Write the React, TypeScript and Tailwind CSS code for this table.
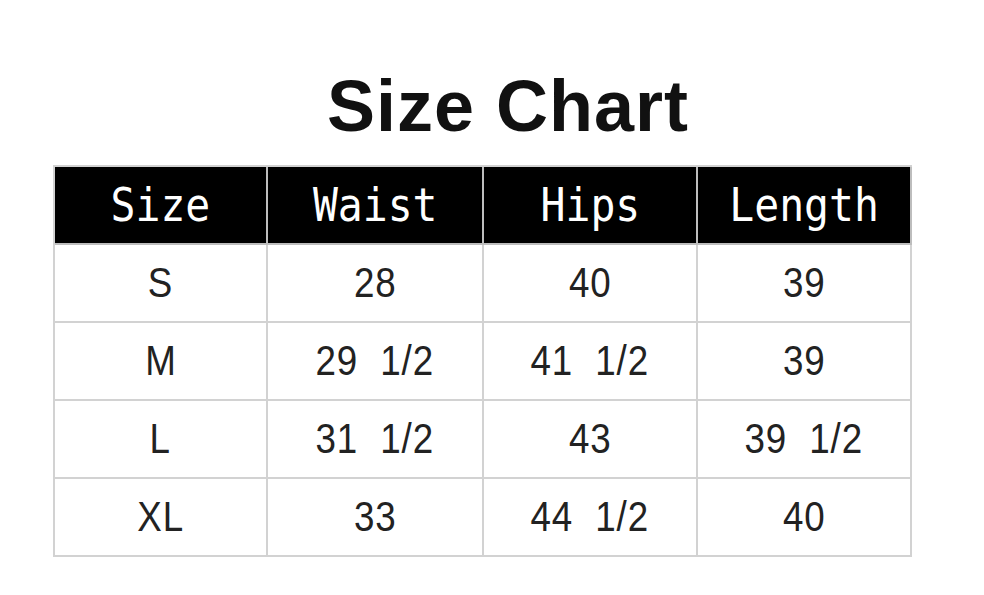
import React from 'react';

const headers = ['Size', 'Waist', 'Hips', 'Length'];

const rows: string[][] = [
  ['S', '28', '40', '39'],
  ['M', '29  1/2', '41  1/2', '39'],
  ['L', '31  1/2', '43', '39  1/2'],
  ['XL', '33', '44  1/2', '40'],
];

export default function App() {
  return (
    <div className="w-[984px] h-[595px] bg-white overflow-hidden">
      <div className="pt-[70px] pl-[32px] text-center">
        <h1 className="text-[72px] leading-[72px] font-bold tracking-[1px] text-[#111] font-['Liberation_Sans',Arial,sans-serif]">
          Size Chart
        </h1>
      </div>
      <div className="ml-[53px] mt-[23px] w-fit grid grid-cols-[213px_216px_214px_214px] border-l-2 border-t-2 border-[#d2d2d2]">
        {headers.map((h) => (
          <div
            key={h}
            className="h-[78px] bg-black border-r-2 border-b-2 border-[#bdbdbd] flex items-center justify-center"
          >
            <span className="inline-block text-white text-[46px] leading-none scale-x-[0.9] font-['DejaVu_Sans_Mono',monospace]">
              {h}
            </span>
          </div>
        ))}
        {rows.map((r) =>
          r.map((c, i) => (
            <div
              key={r[0] + i}
              className="h-[78px] bg-white border-r-2 border-b-2 border-[#d2d2d2] flex items-center justify-center"
            >
              <span className="inline-block whitespace-pre tracking-[1px] text-[#222] text-[42px] leading-none scale-x-[0.875] font-['Liberation_Sans',Arial,sans-serif]">
                {c}
              </span>
            </div>
          ))
        )}
      </div>
    </div>
  );
}
